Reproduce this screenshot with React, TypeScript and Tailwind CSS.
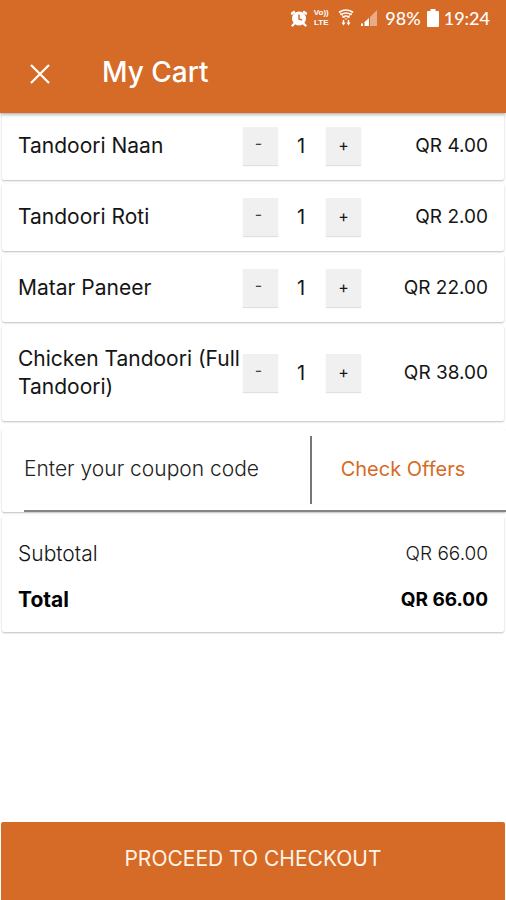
import { useState } from "react";

type Item = { name: string; price: number };

const items: Item[] = [
  { name: "Tandoori Naan", price: 4 },
  { name: "Tandoori Roti", price: 2 },
  { name: "Matar Paneer", price: 22 },
  { name: "Chicken Tandoori (Full Tandoori)", price: 38 },
];

const money = (value: number) => `QR ${value.toFixed(2)}`;

const card = "mx-0.5 rounded-xs bg-white shadow-[0_1px_2px_rgba(0,0,0,0.26)]";

function StatusBar() {
  return (
    <div className="flex h-9 items-center justify-end pr-4 text-white">
      <svg className="mr-1 h-5 w-[18px]" viewBox="0 0 18 20" aria-hidden="true">
        <circle cx="9" cy="10.5" r="7" fill="currentColor" />
        <path d="M2 5.500 4 4M16 5.500 14 4M4 16l-1.500 1.500M14 16l1.500 1.500" stroke="currentColor" strokeWidth="2.400" strokeLinecap="round" />
        <path d="M9 6.500v4.500l3 1" fill="none" stroke="#d66a27" strokeWidth="1.500" />
      </svg>
      <div className="mr-2 flex w-[18px] flex-col items-center font-['Liberation_Sans',sans-serif] text-[8px] leading-[10px] font-bold">
        <span>Vo))</span>
        <span>LTE</span>
      </div>
      <svg className="mr-1.5 h-5 w-4" viewBox="0 0 16 20" fill="none" stroke="currentColor" aria-hidden="true">
        <path d="M1.500 4q6.500-4 13 0M3 6.500q5-3 10 0M5 9q3-2 6 0" strokeWidth="1.600" strokeLinecap="round" />
        <path d="M1.500 4 8 11.500l6.500-7.500" strokeWidth="1" opacity=".7" />
        <path d="M5.500 12v4M10.500 12v4" strokeWidth="1.400" />
        <path d="M3.500 14.500h4l-2 3zM8.500 14.500h4l-2 3z" fill="currentColor" stroke="none" />
      </svg>
      <svg className="mr-1.5 h-5 w-[19px]" viewBox="0 0 19 20" fill="currentColor" aria-hidden="true">
        <path d="M1 15.500h2V18H1zM4.500 14 9 10v8H4.500z" />
        <path d="M10 9 17 2v16h-7z" opacity=".45" />
      </svg>
      <span className="mr-1.5 font-['Lato','Liberation_Sans',sans-serif] text-[18px] leading-5 font-medium">98%</span>
      <svg className="mr-[5px] h-[18px] w-3" viewBox="0 0 12 18" fill="currentColor" aria-hidden="true">
        <path d="M3.500 0h5v2H11q1 0 1 1v14q0 1-1 1H1q-1 0-1-1V3q0-1 1-1h2.500z" />
      </svg>
      <span className="font-['Lato','Liberation_Sans',sans-serif] text-[18px] leading-5 font-medium">19:24</span>
    </div>
  );
}

const stepper =
  "flex h-[38px] w-[35px] items-center justify-center bg-[#f0f0f0] shadow-[0_1px_1px_rgba(0,0,0,0.12)]";

function CartRow({ item, count, onChange }: { item: Item; count: number; onChange: (n: number) => void }) {
  return (
    <li className={`${card} flex items-center px-4 pt-[13px] pb-3.5`}>
      <span className="min-w-0 flex-1 py-1.5 text-[21px]">{item.name}</span>
      <div className="flex items-center">
        <button type="button" aria-label={`Remove one ${item.name}`} className={`${stepper} pr-1 pb-1.5 text-base text-[#444]`} onClick={() => onChange(Math.max(0, count - 1))}>
          -
        </button>
        <span className="w-12 pr-0.5 text-center">{count}</span>
        <button type="button" aria-label={`Add one ${item.name}`} className={`${stepper} pb-0.5 text-base`} onClick={() => onChange(count + 1)}>
          +
        </button>
      </div>
      <span className="w-[127px] text-right text-[19px]">{money(item.price * count)}</span>
    </li>
  );
}

export default function App() {
  const [counts, setCounts] = useState(items.map(() => 1));
  const total = items.reduce((sum, item, i) => sum + item.price * counts[i], 0);

  return (
    <div className="flex min-h-screen flex-col bg-white font-['Inter','Liberation_Sans',sans-serif] text-[20px] leading-7 text-[#151515]">
      <header className="relative bg-[#d66a27] text-white shadow-[0_1px_4px_rgba(0,0,0,0.4)]">
        <StatusBar />
        <div className="flex h-[77px] items-center pb-1.5 pl-7">
          <button type="button" aria-label="Close cart" className="mr-[50px] pt-1">
            <svg className="size-6" viewBox="0 0 24 24" stroke="currentColor" strokeWidth="2.200" aria-hidden="true">
              <path d="M3 3 21 21M21 3 3 21" />
            </svg>
          </button>
          <h1 className="text-[28px] leading-9 font-medium">My Cart</h1>
        </div>
      </header>

      <main className="flex-1">
        <ul className="flex flex-col gap-1">
          {items.map((item, i) => (
            <CartRow key={item.name} item={item} count={counts[i]} onChange={(n) => setCounts(counts.map((c, j) => (j === i ? n : c)))} />
          ))}
        </ul>

        <section className={`${card} mt-2 mr-0 pl-[22px]`}>
          <div className="flex h-[83px] items-center border-b-2 border-[#858585]">
            <input type="text" aria-label="Coupon code" placeholder="Enter your coupon code" className="min-w-0 flex-1 pb-0.5 text-[21px] font-light outline-none placeholder:text-[#222] placeholder:opacity-100" />
            <div className="flex h-[68px] w-[196px] items-center justify-center border-l-2 border-[#777] pr-3">
              <a href="#offers" className="pb-0.5 text-[#d66a27]">Check Offers</a>
            </div>
          </div>
        </section>

        <dl className={`${card} mt-1 flex flex-col gap-[18px] px-4 pt-6 pb-[18px]`}>
          <div className="flex justify-between font-light">
            <dt className="text-[21px]">Subtotal</dt>
            <dd className="text-[19px]">{money(total)}</dd>
          </div>
          <div className="flex justify-between font-bold text-black">
            <dt className="text-[21px]">Total</dt>
            <dd className="text-[19px]">{money(total)}</dd>
          </div>
        </dl>
      </main>

      <button type="button" className="mx-px h-[78px] rounded-t-xs bg-[#d66a27] pb-1 text-[21px] text-[#fff3e6]">
        PROCEED TO CHECKOUT
      </button>
    </div>
  );
}
